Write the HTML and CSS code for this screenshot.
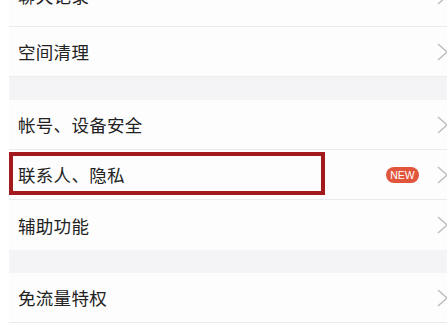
FILE: index.html
```html
<!DOCTYPE html>
<html lang="zh">
<head>
<meta charset="utf-8">
<link rel="stylesheet" href="styles.css">
</head>
<body>
<div class="list">
  <div class="row row-top"><span class="label">聊天记录</span><svg class="chev" viewBox="0 0 12 18"><polyline points="1,1 10,9 1,17"/></svg></div>
  <div class="row"><span class="label">空间清理</span><svg class="chev" viewBox="0 0 12 18"><polyline points="1,1 10,9 1,17"/></svg></div>
  <div class="gap"></div>
  <div class="row"><span class="label">帐号、设备安全</span><svg class="chev" viewBox="0 0 12 18"><polyline points="1,1 10,9 1,17"/></svg></div>
  <div class="row row-mark"><span class="label">联系人、隐私</span><span class="badge">NEW</span><svg class="chev" viewBox="0 0 12 18"><polyline points="1,1 10,9 1,17"/></svg><div class="mark"></div></div>
  <div class="row last"><span class="label">辅助功能</span><svg class="chev" viewBox="0 0 12 18"><polyline points="1,1 10,9 1,17"/></svg></div>
  <div class="gap"></div>
  <div class="row"><span class="label">免流量特权</span><svg class="chev" viewBox="0 0 12 18"><polyline points="1,1 10,9 1,17"/></svg></div>
</div>
</body>
</html>
```
FILE: styles.css
```css
html, body {
  margin: 0;
  padding: 0;
  background: #ffffff;
  width: 447px;
  height: 330px;
  overflow: hidden;
}
.list {
  margin-left: 9px;
  width: 438px;
  font-family: "Noto Sans CJK SC", "Noto Sans", sans-serif;
  color: #222;
}
.row {
  position: relative;
  display: flex;
  align-items: center;
  height: 50px;
  background: #fdfdfd;
  border-bottom: 1px solid #ebebec;
  padding-left: 9px;
  box-sizing: border-box;
}
.row-top {
  margin-top: -23px;
  padding-bottom: 12px;
}
.row.last {
  border-bottom: none;
}
.label {
  font-size: 17.5px;
  flex: 1;
  letter-spacing: 0.3px;
}
.gap {
  height: 23px;
  background: #f4f3f6;
}
.chev {
  width: 12px;
  height: 18px;
  margin-right: -2px;
  fill: none;
  stroke: #bdbdbd;
  stroke-width: 1.4;
}
.badge {
  background: #e0553b;
  color: #fff;
  font-family: "Liberation Sans", Arial, sans-serif;
  font-size: 10.5px;
  height: 16px;
  line-height: 16px;
  width: 33px;
  text-align: center;
  border-radius: 8px;
  margin-right: 18px;
}
.mark {
  position: absolute;
  left: 0;
  top: 2px;
  width: 316px;
  height: 43px;
  border: 4px solid #a31a1c;
  box-sizing: border-box;
}
```
